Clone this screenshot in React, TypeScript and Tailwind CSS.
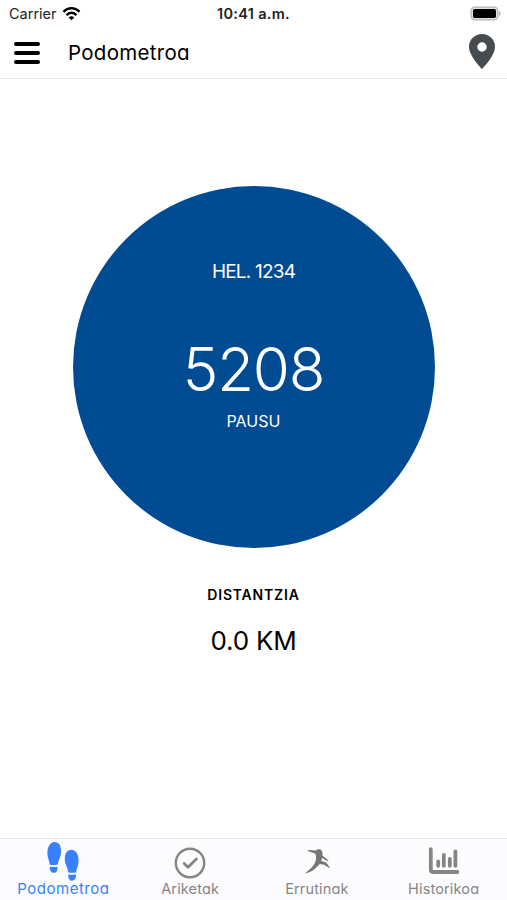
const tabs = [
    { name: 'Podometroa', icon: <StepsIcon />, active: true },
    { name: 'Ariketak', icon: <CheckIcon />, active: false },
    { name: 'Errutinak', icon: <RunnerIcon />, active: false },
    { name: 'Historikoa', icon: <ChartIcon />, active: false },
];

function WifiIcon() {
    return (
        <svg className="ml-[5px] h-[14px] w-[19px]" viewBox="0 0 18 14" fill="none" stroke="#000" strokeWidth="2.4">
            <path d="M1 4.9C5.5 0 12.5 0 17 4.9" />
            <path d="M4 8.1C6.9 5 11.1 5 14 8.1" />
            <path d="M6.2 10.4C7.8 8.9 10.2 8.9 11.8 10.4L9 13.3Z" fill="#000" stroke="none" />
        </svg>
    );
}

function BatteryIcon() {
    return (
        <svg className="h-[15px] w-[32px]" viewBox="0 0 32 15">
            <rect x="1.1" y="1.1" width="26.8" height="12.8" rx="3.8" fill="#e2e2e2" stroke="#b5b5b5" strokeWidth="1.3" />
            <rect x="3" y="3" width="23" height="9" rx="1.8" fill="#000" />
            <path d="M29 5.2C31.2 5.9 31.2 9.1 29 9.8Z" fill="#b5b5b5" />
        </svg>
    );
}

function PinIcon() {
    return (
        <svg className="mb-1 h-[35px] w-[26px]" viewBox="0 0 26 35" fill="#464b50">
            <path fillRule="evenodd" d="M13 0C5.8 0 0 5.6 0 12.7C0 22 13 35 13 35S26 22 26 12.7C26 5.6 20.2 0 13 0ZM13 8.3A4.7 4.7 0 1 1 13 17.7A4.7 4.7 0 0 1 13 8.3Z" />
        </svg>
    );
}

function StepsIcon() {
    return (
        <svg className="h-[39px] w-[32px]" viewBox="0 0 32 39" fill="#3880ff">
            <path d="M7.5 0C11.9 0 14.1 3.6 14.1 9.2C14.1 15.2 11.2 18 10.8 22.6C8.2 23.3 5.2 23.2 2.7 22.7C2.5 18.3 0.4 16.4 0.4 11C0.4 5 3 0 7.5 0Z" />
            <path d="M2.7 24.5C5.4 25.2 8 25.2 10.6 24.5C10.6 28.8 9.6 30.8 6.8 30.8C4.2 30.8 2.8 28.8 2.7 24.5Z" />
            <path d="M24.4 7.8C29 7.8 31.6 12.8 31.6 18.8C31.6 24.2 29.4 26 29.2 30.5C26.6 31 23.8 31 21.1 30.4C20.9 25 17.8 22.6 17.8 17C17.8 11.4 20.2 7.8 24.4 7.8Z" />
            <path d="M21.2 32.2C23.8 33 26.4 33 29.1 32.3C29 36.6 27.6 38.7 25 38.7C22.4 38.7 21.3 36.6 21.2 32.2Z" />
        </svg>
    );
}

function CheckIcon() {
    return (
        <svg className="h-[39px] w-[32px]" viewBox="0 0 32 39" fill="none" stroke="#858585" strokeWidth="2.4">
            <circle cx="16" cy="21" r="14.2" />
            <path d="M10.2 21.5L14 25.2L22.4 17" strokeWidth="2.8" strokeLinecap="round" strokeLinejoin="round" />
        </svg>
    );
}

function RunnerIcon() {
    return (
        <svg className="h-[39px] w-[32px]" viewBox="0 0 32 39" fill="#757575">
            <path d="M5.8 8.1C9 8 12.2 8.3 14.9 8.4C16.2 7 19.2 7 20.6 8.6C21.8 10.2 21.5 12 21.3 14C21.2 18 19.2 21.4 16.8 24C13.2 28 9 30.8 3.8 31.4C8.8 27.8 13.8 23.4 14.8 18C15.4 14.8 15.2 12.9 14 11.4C11.6 10.6 8.6 10.2 5.8 8.1Z" />
            <path d="M21 13.2C23.7 15.2 26.2 16.8 27.8 19.6C25.4 18.8 23 17.6 20.8 15.6Z" />
            <path d="M19.8 18.8C22 19.8 24 20 25.2 20.6C26 22.4 28 23.8 29.2 26C26.8 25.2 24.8 24 23.3 22.7C21.2 22.2 19.8 22.2 18 22.2Z" />
        </svg>
    );
}

function ChartIcon() {
    return (
        <svg className="h-[39px] w-[32px]" viewBox="0 0 32 39" fill="none" stroke="#858585" strokeLinecap="round" strokeLinejoin="round">
            <path d="M2.8 7.2V27.6Q2.8 30 5.2 30H29.4" strokeWidth="3.8" />
            <path d="M10.2 19.3V23.8M15.8 13V23.8M21.8 17V23.8M27.4 9.4V23.8" strokeWidth="3.8" />
        </svg>
    );
}

const App = () => {
    return (
        <div className="flex h-[900px] w-[507px] flex-col bg-white font-['Inter',sans-serif] text-black [font-feature-settings:'cv11']">
            {/* Status bar */}
            <div className="grid h-7 shrink-0 grid-cols-3 items-center pl-[9px] pr-[9px] [font-feature-settings:normal]">
                <div className="flex items-center">
                    <span className="text-[14.5px] leading-none text-[#222]">Carrier</span>
                    <WifiIcon />
                </div>
                <div className="text-center text-[14.5px] leading-none font-semibold tracking-[0.3px] text-[#222]">10:41 a.m.</div>
                <div className="-mt-0.5 -mr-1 flex justify-end">
                    <BatteryIcon />
                </div>
            </div>

            {/* Header */}
            <header className="flex h-[51px] shrink-0 items-center border-b border-[#ececec] pr-3 pl-3.5">
                <button className="flex w-[26px] flex-col gap-[5px]">
                    <span className="h-1 w-full rounded-full bg-black" />
                    <span className="h-1 w-full rounded-full bg-black" />
                    <span className="h-1 w-full rounded-full bg-black" />
                </button>
                <h1 className="ml-7 flex-1 text-[20.5px] leading-none tracking-[0.3px]">Podometroa</h1>
                <PinIcon />
            </header>

            {/* Steps */}
            <main className="flex flex-1 flex-col items-center pt-[107px]">
                <div className="flex size-[362px] flex-col items-center rounded-full bg-[#004b91] pt-[76px] text-white">
                    <p className="text-[19px] leading-5 tracking-[-0.8px]">HEL. 1234</p>
                    <p className="mt-[57px] text-[60px] leading-[60px] font-[350] tracking-[-1.2px]">5208</p>
                    <p className="mt-3 text-base leading-5">PAUSU</p>
                </div>
                <p className="mt-[37px] text-sm leading-5 font-semibold tracking-[0.8px]">DISTANTZIA</p>
                <p className="mt-[21px] text-[26px] leading-[30px] tracking-[-0.2px]">0.0 KM</p>
            </main>

            {/* Tabs */}
            <nav className="grid h-[62px] shrink-0 grid-cols-4 border-t border-[#e6e6e8] bg-[#fcfcfe]">
                {tabs.map((tab) => (
                    <a key={tab.name} className={`flex flex-col items-center pt-[3px] ${tab.active ? 'text-[#3880ff]' : 'text-[#858585]'}`}>
                        {tab.icon}
                        <span className={`leading-4 ${tab.active ? 'text-[15px] tracking-[0.5px]' : 'text-[14.5px] tracking-[0.15px]'}`}>{tab.name}</span>
                    </a>
                ))}
            </nav>
        </div>
    );
};

export default App;
